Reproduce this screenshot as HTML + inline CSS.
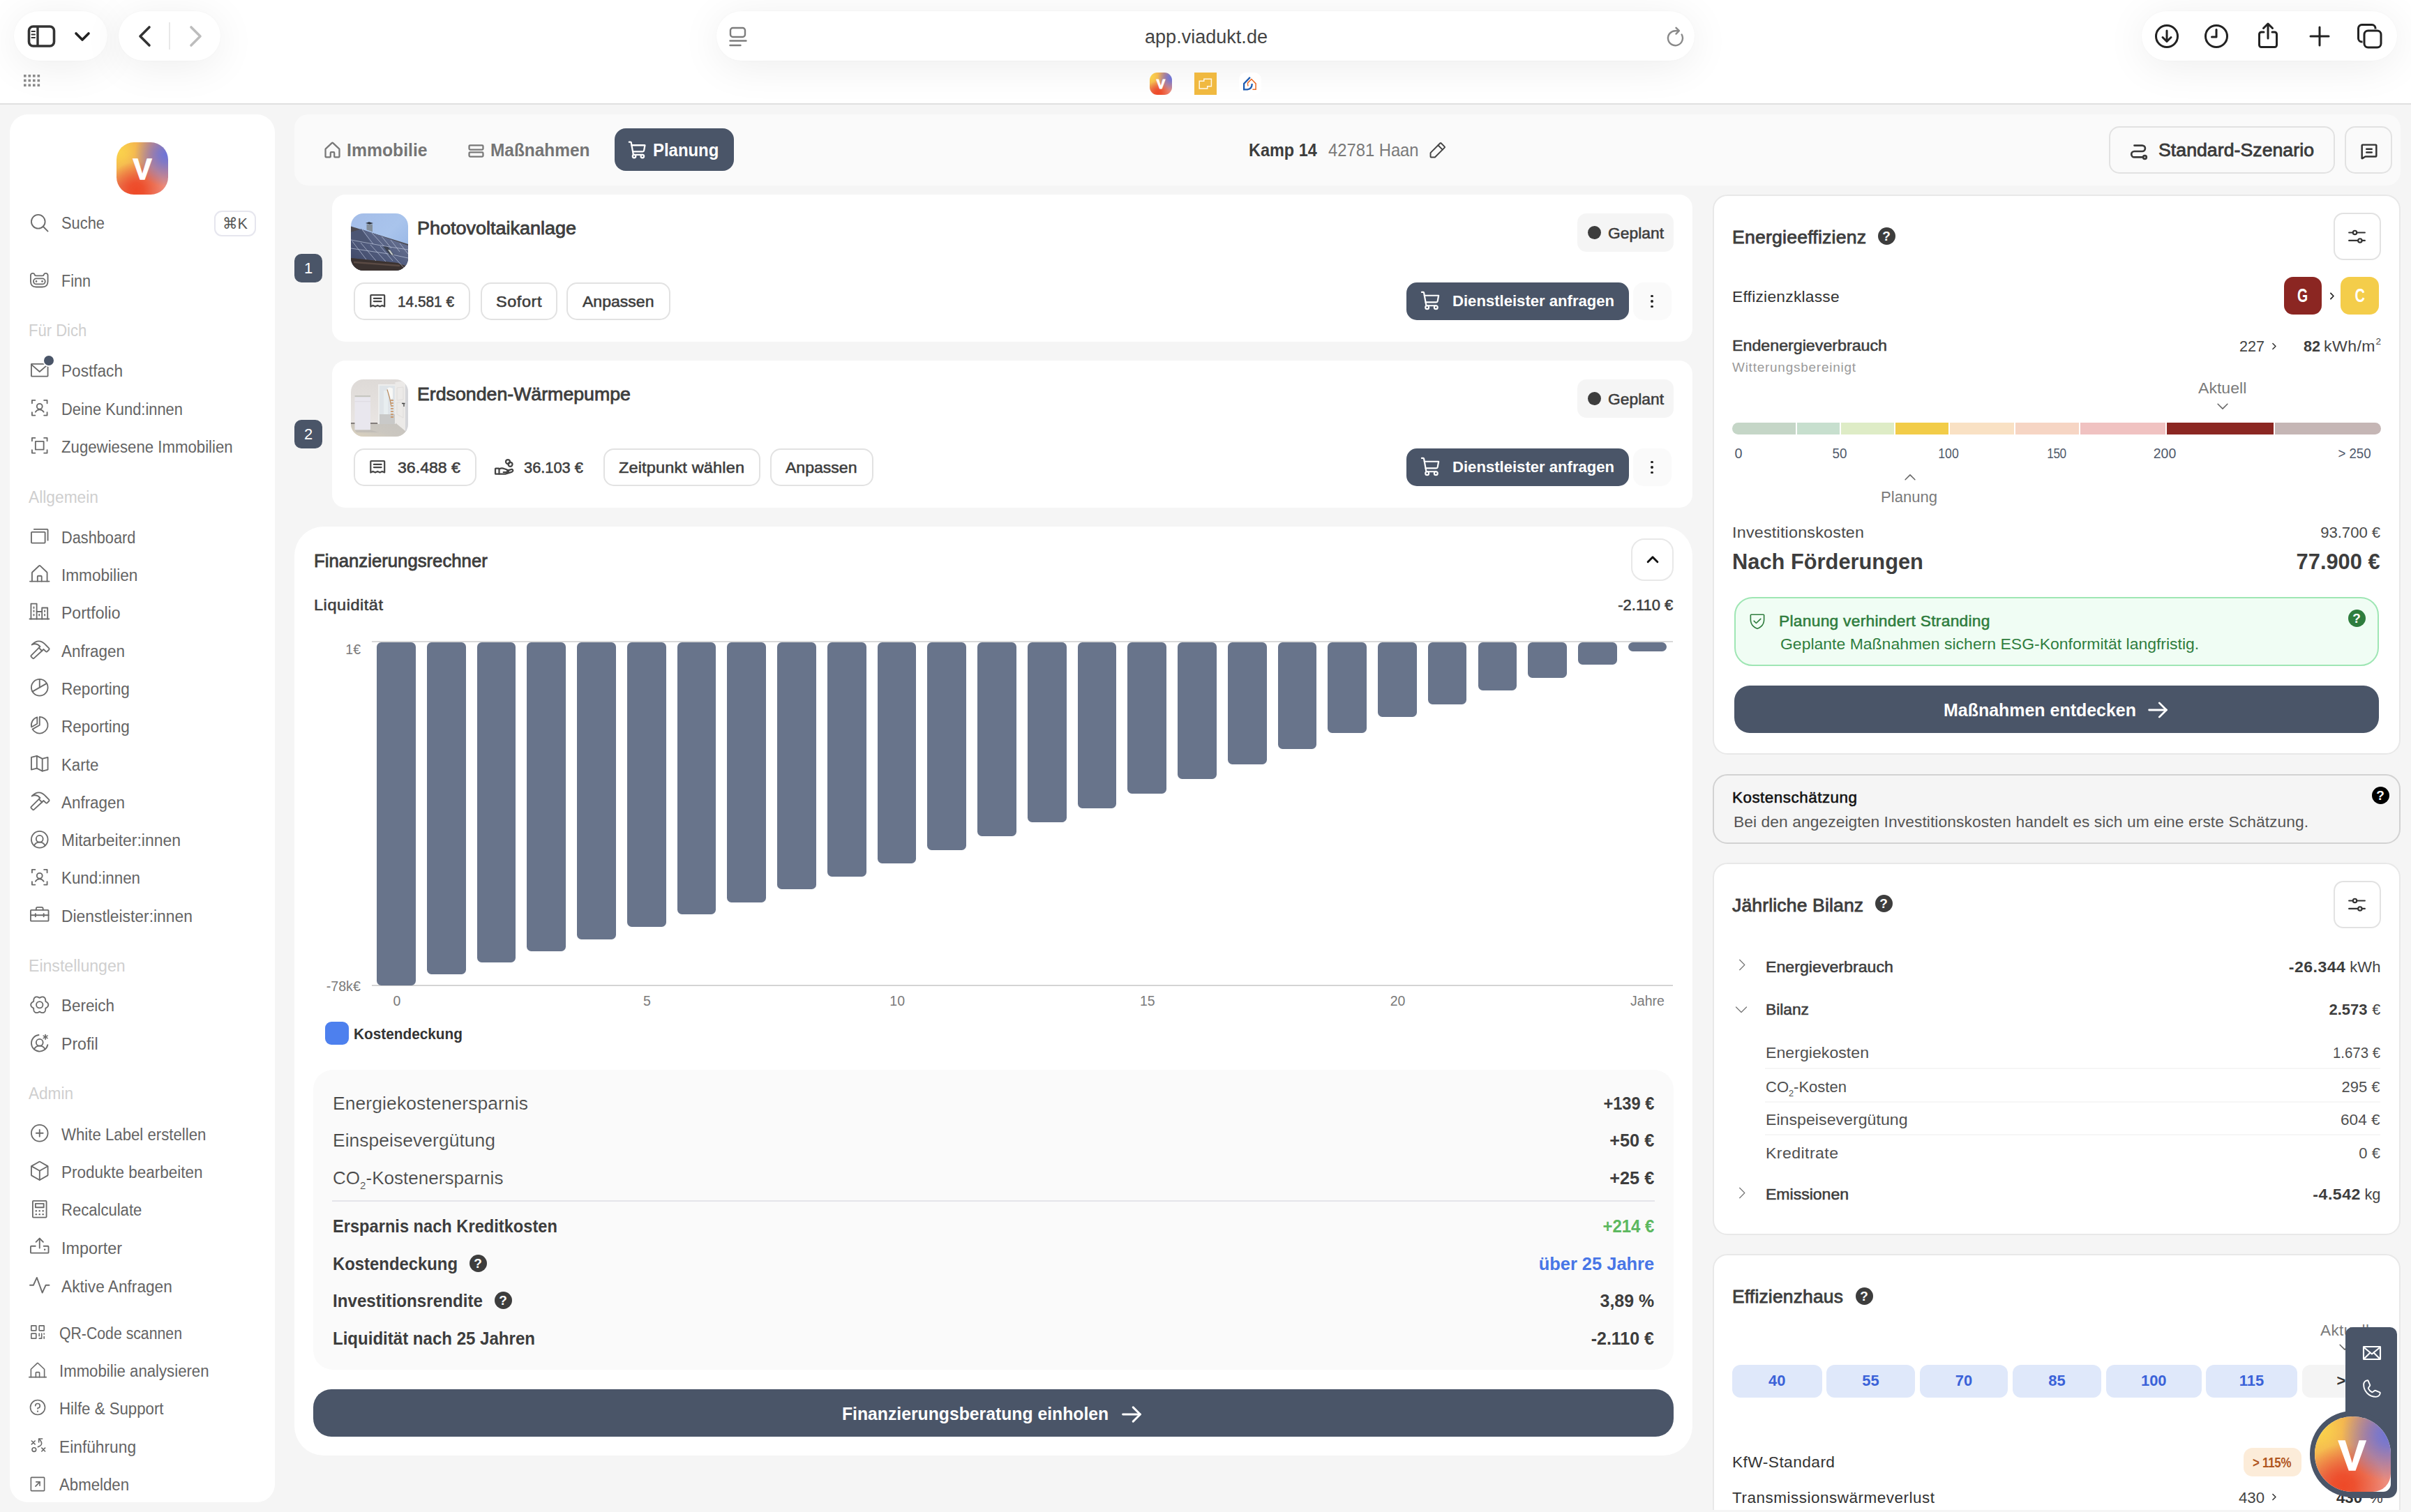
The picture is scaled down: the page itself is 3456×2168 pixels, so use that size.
<!DOCTYPE html>
<html lang="de"><head><meta charset="utf-8"><title>viadukt</title>
<style>
*{box-sizing:border-box;margin:0;padding:0}
html,body{width:3456px;height:2168px;overflow:hidden}
body{background:#f5f5f5;font-family:"Liberation Sans",sans-serif;color:#3d3d3d;position:relative;-webkit-font-smoothing:antialiased}
.a{position:absolute}
.t{position:absolute;white-space:nowrap;line-height:1;transform:translateY(calc(-50% + .7px))}
.tr{position:absolute;white-space:nowrap;line-height:1;transform:translateY(calc(-50% + .7px));text-align:right}
.b{font-weight:700}
.m{-webkit-text-stroke:0.55px currentColor}
.m2{-webkit-text-stroke:0.8px currentColor}
svg{position:absolute;overflow:visible}
.ic{fill:none;stroke:#6b6b6b;stroke-width:2;stroke-linecap:round;stroke-linejoin:round}
/* chrome */
#chrome{left:0;top:0;width:3456px;height:149.500px;background:#fff;border-bottom:2px solid #e0e0e0}
.pill{position:absolute;top:16px;height:71px;border-radius:36px;background:#fff;box-shadow:0 0 0 1px rgba(0,0,0,.012),0 8px 60px rgba(0,0,0,.075)}
/* sidebar */
#side{left:14px;top:164px;width:380px;height:1990px;background:#fff;border-radius:26px}
.si{color:#646464;font-size:23.5px;left:88px}
.sl{color:#cfcfcf;font-size:23.5px;left:41px}
.card{position:absolute;background:#fff;border-radius:19px}
.rc{position:absolute;left:2455px;width:986px;background:#fff;border:2px solid #e8e8e8;border-radius:21px}
.btn{position:absolute;border:2px solid #e2e2e2;border-radius:15px;background:#fff}
.dark{background:#4a5568;color:#fff}
.q{position:absolute;width:25px;height:25px;border-radius:50%;background:#3d3d3d;color:#fff;font-weight:700;font-size:19px;line-height:25.500px;text-align:center}
.bar{position:absolute;top:920.500px;width:55.800px;background:#68748b;border-radius:6.500px}
.xl{position:absolute;top:1435.700px;transform:translate(-50%,-50%);font-size:19.500px;color:#7a7a7a;line-height:1;white-space:nowrap}
.el{position:absolute;top:650.400px;transform:translate(-50%,-50%);font-size:20px;color:#505a6b;line-height:1;white-space:nowrap}
.chip{position:absolute;top:1957.400px;height:46.200px;border-radius:12px;background:#dfe8fa;color:#3a62d8;font-weight:700;font-size:21.900px;line-height:46.600px;text-align:center}
.dv{position:absolute;height:2px;background:#f6f6f6}

.pi{fill:none;stroke:currentColor;stroke-linecap:round;stroke-linejoin:round}
.pi .f{fill:currentColor;stroke:none}
.logo{background:radial-gradient(circle at 97% 24%,#6d74d8 0%,rgba(112,118,212,.85) 13%,rgba(150,110,170,0) 50%),radial-gradient(circle at 38% 92%,#ee4927 0%,rgba(238,74,40,.9) 13%,rgba(238,74,40,0) 50%),radial-gradient(circle at 6% 18%,#fad24c 0%,rgba(250,208,76,.88) 12%,rgba(250,208,76,0) 52%),linear-gradient(135deg,#f2a548 0%,#e68a62 48%,#ef8c82 100%)}
.sub{font-size:.58em;position:relative;top:.5em;letter-spacing:0}
</style></head><body>
<div id="chrome" class="a">
 <div class="pill" style="left:20px;width:134px"></div>
 <div class="pill" style="left:170px;width:146px"></div>
 <div class="pill" style="left:1027px;width:1402px"></div>
 <div class="pill" style="left:3070px;width:366px"></div>
 <!-- sidebar icon -->
 <svg style="left:38px;top:34px" width="44" height="36" viewBox="0 0 44 36"><rect x="3.5" y="4" width="36" height="28" rx="6" fill="none" stroke="#333" stroke-width="3.6"></rect><line x1="16" y1="4" x2="16" y2="32" stroke="#333" stroke-width="3.4"></line><path d="M7.5 11h4.5M7.5 15.5h4.5M7.5 20h4.5" stroke="#333" stroke-width="2" stroke-linecap="round"></path></svg>
 <svg style="left:106px;top:45px" width="24" height="16" viewBox="0 0 24 16"><path d="M3 3l9 9 9-9" fill="none" stroke="#222" stroke-width="3.6" stroke-linecap="round" stroke-linejoin="round"></path></svg>
 <svg style="left:197px;top:36px" width="22" height="32" viewBox="0 0 22 32"><path d="M17 3L4 16l13 13" fill="none" stroke="#333" stroke-width="3.6" stroke-linecap="round" stroke-linejoin="round"></path></svg>
 <div class="a" style="left:242px;top:32px;width:2px;height:39px;background:#e8e8e8"></div>
 <svg style="left:269px;top:36px" width="22" height="32" viewBox="0 0 22 32"><path d="M5 3l13 13L5 29" fill="none" stroke="#bdbdbd" stroke-width="3.6" stroke-linecap="round" stroke-linejoin="round"></path></svg>
 <!-- grid -->
 <svg style="left:34px;top:107px" width="24" height="18" viewBox="0 0 24 18" fill="#8a8a8a"><g id="gd"><rect x="0" y="0" width="3.6" height="3.6"></rect><rect x="6.5" y="0" width="3.6" height="3.6"></rect><rect x="13" y="0" width="3.6" height="3.6"></rect><rect x="19.5" y="0" width="3.6" height="3.6"></rect></g><use href="#gd" y="6.7"></use><use href="#gd" y="13.4"></use></svg>
 <!-- reader icon -->
 <svg style="left:1045px;top:38px" width="26" height="30" viewBox="0 0 26 30"><rect x="2" y="2" width="21" height="13" rx="3.5" fill="none" stroke="#7d7d7d" stroke-width="2.4"></rect><path d="M1.5 20.5h23M1.5 27h15" stroke="#7d7d7d" stroke-width="2.4" stroke-linecap="round"></path></svg>
 <div class="t" style="left: 1641px; top: 53.3px; font-size: 27px; color: rgb(68, 68, 68); transform: translateY(calc(-50% + 0.7px)) scaleX(1.002); transform-origin: left center;">app.viadukt.de</div>
 <!-- reload -->
 <svg style="left:2388px;top:38px" width="28" height="30" viewBox="0 0 28 30"><path d="M22.6 11.5A10.5 10.5 0 1 1 14 6.2h4" fill="none" stroke="#8a8a8a" stroke-width="2.4" stroke-linecap="round"></path><path d="M14.5 1.8l4.4 4.4-4.4 4.4" fill="none" stroke="#8a8a8a" stroke-width="2.4" stroke-linecap="round" stroke-linejoin="round"></path></svg>
 <!-- favicons -->
 <div class="a logo" style="left:1648px;top:104px;width:32px;height:32px;border-radius:11px"></div>
 <div class="a b" style="left:1648px;top:104px;width:32px;height:32px;line-height:33px;text-align:center;color:#fff;font-size:18.500px;-webkit-text-stroke:1px #fff">V</div>
 <div class="a" style="left:1712px;top:104px;width:32px;height:32px;background:#f0b940"></div>
 <svg style="left:1712px;top:104px" width="32" height="32" viewBox="0 0 32 32"><path d="M7.200 12.200H13.800V9.200H24.400V19.800H18.700V22.900H7.200Z" fill="none" stroke="#fff7e6" stroke-width="1.500"></path></svg>
 <div class="a" style="left:1776px;top:104px;width:32px;height:32px;background:#fff;border-radius:10px"></div>
 <svg style="left:1776px;top:104px" width="32" height="32" viewBox="0 0 32 32"><path d="M13.100 19.500Q11.800 16 12.700 14.600L17.900 9.500L24.100 15.900V24.300H19.400" fill="none" stroke="#ea6a25" stroke-width="1.500"></path><path d="M15.900 6.900L7.100 15.900V24.300H12Q18.700 23.500 18.700 15.900" fill="none" stroke="#1f5cb0" stroke-width="2.300"></path></svg>
 <!-- right icons -->
 <svg style="left:3088px;top:34px" width="36" height="36" viewBox="0 0 36 36"><circle cx="18" cy="18" r="15.5" fill="none" stroke="#222" stroke-width="3"></circle><path d="M18 10v15M12 19.5l6 6 6-6" fill="none" stroke="#222" stroke-width="3" stroke-linecap="round" stroke-linejoin="round"></path></svg>
 <svg style="left:3159px;top:34px" width="36" height="36" viewBox="0 0 36 36"><circle cx="18" cy="18" r="15.5" fill="none" stroke="#222" stroke-width="3"></circle><path d="M18 8.5V19h-6.5" fill="none" stroke="#222" stroke-width="3" stroke-linecap="round" stroke-linejoin="round"></path></svg>
 <svg style="left:3234px;top:31px" width="34" height="40" viewBox="0 0 34 40"><path d="M11 15H7.5a3 3 0 0 0-3 3v15.5a3 3 0 0 0 3 3h19a3 3 0 0 0 3-3V18a3 3 0 0 0-3-3H23" fill="none" stroke="#222" stroke-width="3" stroke-linecap="round"></path><path d="M17 24V3.5M10.5 9.5l6.500-6.500 6.500 6.500" fill="none" stroke="#222" stroke-width="3" stroke-linecap="round" stroke-linejoin="round"></path></svg>
 <svg style="left:3310px;top:37px" width="30" height="30" viewBox="0 0 30 30"><path d="M15 2v26M2 15h26" stroke="#222" stroke-width="3" stroke-linecap="round"></path></svg>
 <svg style="left:3378px;top:33px" width="38" height="38" viewBox="0 0 38 38"><rect x="11" y="11" width="24" height="24" rx="5.5" fill="#fff" stroke="#222" stroke-width="3"></rect><path d="M8.5 27H7.5a5 5 0 0 1-5-5V7.500a5 5 0 0 1 5-5H22a5 5 0 0 1 5 5v1" fill="none" stroke="#222" stroke-width="3"></path></svg>
</div>

<div id="side" class="a"></div>
<div class="a logo" style="left:167px;top:204px;width:74px;height:75px;border-radius:25px"></div>
<div class="a b" style="left:167px;top:204px;width:74px;height:75px;line-height:77px;text-align:center;color:#fff;font-size:42.500px;-webkit-text-stroke:1.500px #fff"><span style="display:inline-block;transform:scaleX(.94)">V</span></div>
<svg style="left:41px;top:303.5px;color:#6b6b6b;stroke-width:15" width="31.5" height="31.5" viewBox="0 0 256 256" class="pi"><circle cx="112" cy="112" r="80"></circle><line x1="168.600" y1="168.600" x2="224" y2="224"></line></svg>
<div class="t si" style="top: 319.5px; transform: translateY(calc(-50% + 0.7px)) scaleX(0.93); transform-origin: left center;">Suche</div>
<div class="a" style="left:307px;top:302px;width:60px;height:37px;border:2px solid #e6e6ee;border-radius:11px"></div>
<div class="t" style="left: 319px; top: 320.3px; font-size: 22px; color: rgb(85, 85, 85); transform: translateY(calc(-50% + 0.7px)) scaleX(0.981); transform-origin: left center;">⌘K</div>
<svg style="left:41px;top:385.2px;color:#6b6b6b;stroke-width:15" width="31.5" height="31.5" viewBox="0 0 256 256" class="pi"><path d="M24 150V78A24 24 0 0 1 70 70Q72 84 86 84H162Q176 84 178 70A24 24 0 0 1 224 78V150Q224 215 160 215H88Q24 215 24 150Z"></path><rect x="57" y="117" width="136" height="65" rx="32.500"></rect><circle cx="89.500" cy="149.500" r="10.500" class="f"></circle><circle cx="158.500" cy="149.500" r="10.500" class="f"></circle></svg>
<div class="t si" style="top: 402.9px; transform: translateY(calc(-50% + 0.7px)) scaleX(0.919); transform-origin: left center;">Finn</div>
<svg style="left:41px;top:514.7px;color:#6b6b6b;stroke-width:15" width="31.5" height="31.5" viewBox="0 0 256 256" class="pi"><rect x="32" y="56" width="192" height="144" rx="4"></rect><polyline points="224 62 128 146 32 62"></polyline></svg>
<div class="t si" style="top: 532.4px; transform: translateY(calc(-50% + 0.7px)) scaleX(0.962); transform-origin: left center;">Postfach</div>
<svg style="left:41px;top:568.8px;color:#6b6b6b;stroke-width:15" width="31.5" height="31.5" viewBox="0 0 256 256" class="pi"><polyline points="180 40 216 40 216 76"></polyline><polyline points="76 216 40 216 40 180"></polyline><polyline points="216 180 216 216 180 216"></polyline><polyline points="40 76 40 40 76 40"></polyline><circle cx="128" cy="112" r="32"></circle><path d="M80 176a56 56 0 0 1 96 0"></path></svg>
<div class="t si" style="top: 586.5px; transform: translateY(calc(-50% + 0.7px)) scaleX(0.931); transform-origin: left center;">Deine Kund:innen</div>
<svg style="left:41px;top:622.9px;color:#6b6b6b;stroke-width:15" width="31.5" height="31.5" viewBox="0 0 256 256" class="pi"><polyline points="180 40 216 40 216 76"></polyline><polyline points="76 216 40 216 40 180"></polyline><polyline points="216 180 216 216 180 216"></polyline><polyline points="40 76 40 40 76 40"></polyline><rect x="80" y="80" width="96" height="96" rx="2"></rect></svg>
<div class="t si" style="top: 640.6px; transform: translateY(calc(-50% + 0.7px)) scaleX(0.945); transform-origin: left center;">Zugewiesene Immobilien</div>
<svg style="left:41px;top:753.2px;color:#6b6b6b;stroke-width:15" width="31.5" height="31.5" viewBox="0 0 256 256" class="pi"><rect x="32" y="80" width="160" height="128" rx="8"></rect><path d="M64 48H216a8 8 0 0 1 8 8V176"></path></svg>
<div class="t si" style="top: 770.9px; transform: translateY(calc(-50% + 0.7px)) scaleX(0.925); transform-origin: left center;">Dashboard</div>
<svg style="left:41px;top:806.9px;color:#6b6b6b;stroke-width:15" width="31.5" height="31.5" viewBox="0 0 256 256" class="pi"><path d="M216 216V115.500a8 8 0 0 0-2.600-5.900l-80-75.500a8 8 0 0 0-10.800 0l-80 75.500a8 8 0 0 0-2.600 5.900V216"></path><line x1="16" y1="216" x2="240" y2="216"></line><path d="M152 216V160a8 8 0 0 0-8-8H112a8 8 0 0 0-8 8v56"></path></svg>
<div class="t si" style="top: 824.6px; transform: translateY(calc(-50% + 0.7px)) scaleX(0.962); transform-origin: left center;">Immobilien</div>
<svg style="left:41px;top:861.0px;color:#6b6b6b;stroke-width:15" width="31.5" height="31.5" viewBox="0 0 256 256" class="pi"><line x1="12" y1="215" x2="238" y2="215"></line><path d="M28 215V38H94.500V215"></path><path d="M94.500 130H156"></path><path d="M156 215V85H221V215"></path><path d="M61 76v14M61 117v14M61 161v14M124 161v14M188 117v14M188 161v14"></path></svg>
<div class="t si" style="top: 878.7px; transform: translateY(calc(-50% + 0.7px)) scaleX(0.98); transform-origin: left center;">Portfolio</div>
<svg style="left:41px;top:916.2px;color:#6b6b6b;stroke-width:15" width="31.5" height="31.5" viewBox="0 0 256 256" class="pi"><path d="M38 69Q120 -14 197 69L238 110Q244 118 238 126L215 149Q209 154 203 149L174 122L156 140L120 104L134 90Q90 42 38 69Z"></path><path d="M120 104L30 194a10 10 0 0 0 0 14l18 18a10 10 0 0 0 14 0L156 140"></path></svg>
<div class="t si" style="top: 933.9px; transform: translateY(calc(-50% + 0.7px)) scaleX(0.954); transform-origin: left center;">Anfragen</div>
<svg style="left:41px;top:969.9px;color:#6b6b6b;stroke-width:15" width="31.5" height="31.5" viewBox="0 0 256 256" class="pi"><circle cx="128" cy="128" r="96"></circle><line x1="128" y1="128" x2="128" y2="32"></line><line x1="211.100" y1="80" x2="44.900" y2="176"></line></svg>
<div class="t si" style="top: 987.6px; transform: translateY(calc(-50% + 0.7px)) scaleX(0.96); transform-origin: left center;">Reporting</div>
<svg style="left:41px;top:1024.2px;color:#6b6b6b;stroke-width:15" width="31.5" height="31.5" viewBox="0 0 256 256" class="pi"><path d="M128 32a96 96 0 1 1-83.100 144L128 128Z"></path><path d="M100 112V36A96 96 0 0 0 34 150Z"></path></svg>
<div class="t si" style="top: 1041.9px; transform: translateY(calc(-50% + 0.7px)) scaleX(0.96); transform-origin: left center;">Reporting</div>
<svg style="left:41px;top:1078.8px;color:#6b6b6b;stroke-width:15" width="31.5" height="31.5" viewBox="0 0 256 256" class="pi"><polyline points="96 184 32 200 32 56 96 40"></polyline><polygon points="160 216 96 184 96 40 160 72 160 216"></polygon><polyline points="160 72 224 56 224 200 160 216"></polyline></svg>
<div class="t si" style="top: 1096.5px; transform: translateY(calc(-50% + 0.7px)) scaleX(0.949); transform-origin: left center;">Karte</div>
<svg style="left:41px;top:1132.9px;color:#6b6b6b;stroke-width:15" width="31.5" height="31.5" viewBox="0 0 256 256" class="pi"><path d="M38 69Q120 -14 197 69L238 110Q244 118 238 126L215 149Q209 154 203 149L174 122L156 140L120 104L134 90Q90 42 38 69Z"></path><path d="M120 104L30 194a10 10 0 0 0 0 14l18 18a10 10 0 0 0 14 0L156 140"></path></svg>
<div class="t si" style="top: 1150.6px; transform: translateY(calc(-50% + 0.7px)) scaleX(0.954); transform-origin: left center;">Anfragen</div>
<svg style="left:41px;top:1187.7px;color:#6b6b6b;stroke-width:15" width="31.5" height="31.5" viewBox="0 0 256 256" class="pi"><circle cx="128" cy="128" r="96"></circle><circle cx="128" cy="120" r="40"></circle><path d="M63.800 199.400a72 72 0 0 1 128.400 0"></path></svg>
<div class="t si" style="top: 1205.4px; transform: translateY(calc(-50% + 0.7px)) scaleX(0.977); transform-origin: left center;">Mitarbeiter:innen</div>
<svg style="left:41px;top:1241.7px;color:#6b6b6b;stroke-width:15" width="31.5" height="31.5" viewBox="0 0 256 256" class="pi"><polyline points="180 40 216 40 216 76"></polyline><polyline points="76 216 40 216 40 180"></polyline><polyline points="216 180 216 216 180 216"></polyline><polyline points="40 76 40 40 76 40"></polyline><circle cx="128" cy="112" r="32"></circle><path d="M80 176a56 56 0 0 1 96 0"></path></svg>
<div class="t si" style="top: 1259.4px; transform: translateY(calc(-50% + 0.7px)) scaleX(0.95); transform-origin: left center;">Kund:innen</div>
<svg style="left:41px;top:1295.8px;color:#6b6b6b;stroke-width:15" width="31.5" height="31.5" viewBox="0 0 256 256" class="pi"><rect x="24" y="72" width="208" height="128" rx="8"></rect><line x1="24" y1="132" x2="232" y2="132"></line><path d="M88 72V56a16 16 0 0 1 16-16h48a16 16 0 0 1 16 16v16"></path><line x1="80" y1="116" x2="80" y2="148"></line><line x1="176" y1="116" x2="176" y2="148"></line></svg>
<div class="t si" style="top: 1313.5px; transform: translateY(calc(-50% + 0.7px)) scaleX(0.972); transform-origin: left center;">Dienstleister:innen</div>
<svg style="left:41px;top:1424.7px;color:#6b6b6b;stroke-width:15" width="31.5" height="31.5" viewBox="0 0 256 256" class="pi"><circle cx="128" cy="128" r="38"></circle><path d="M230.0 128.0 L229.7 132.4 L228.7 136.8 L227.2 141.1 L225.0 145.1 L222.4 148.9 L219.3 152.5 L215.9 155.7 L212.2 158.6 L208.3 161.3 L204.4 163.6 L200.7 165.8 L197.3 168.0 L197.1 172.0 L197.1 176.4 L197.0 180.9 L196.6 185.6 L195.9 190.2 L194.8 194.8 L193.3 199.3 L191.3 203.5 L188.9 207.3 L186.0 210.8 L182.7 213.8 L179.0 216.3 L175.0 218.3 L170.7 219.6 L166.3 220.4 L161.7 220.6 L157.1 220.2 L152.5 219.3 L147.9 217.9 L143.6 216.2 L139.3 214.2 L135.4 212.0 L131.6 209.8 L128.0 208.0 L124.4 209.8 L120.6 212.0 L116.7 214.2 L112.4 216.2 L108.1 217.9 L103.5 219.3 L98.9 220.2 L94.3 220.6 L89.7 220.4 L85.3 219.6 L81.0 218.3 L77.0 216.3 L73.3 213.8 L70.0 210.8 L67.1 207.3 L64.7 203.5 L62.7 199.3 L61.2 194.8 L60.1 190.2 L59.4 185.6 L59.0 180.9 L58.9 176.4 L58.9 172.0 L58.7 168.0 L55.3 165.8 L51.6 163.6 L47.7 161.3 L43.8 158.6 L40.1 155.7 L36.7 152.5 L33.6 148.9 L31.0 145.1 L28.8 141.1 L27.3 136.8 L26.3 132.4 L26.0 128.0 L26.3 123.6 L27.3 119.2 L28.8 114.9 L31.0 110.9 L33.6 107.1 L36.7 103.5 L40.1 100.3 L43.8 97.4 L47.7 94.7 L51.6 92.4 L55.3 90.2 L58.7 88.0 L58.9 84.0 L58.9 79.6 L59.0 75.1 L59.4 70.4 L60.1 65.8 L61.2 61.2 L62.7 56.7 L64.7 52.5 L67.1 48.7 L70.0 45.2 L73.3 42.2 L77.0 39.7 L81.0 37.7 L85.3 36.4 L89.7 35.6 L94.3 35.4 L98.9 35.8 L103.5 36.7 L108.1 38.1 L112.4 39.8 L116.7 41.8 L120.6 44.0 L124.4 46.2 L128.0 48.0 L131.6 46.2 L135.4 44.0 L139.3 41.8 L143.6 39.8 L147.9 38.1 L152.5 36.7 L157.1 35.8 L161.7 35.4 L166.3 35.6 L170.7 36.4 L175.0 37.7 L179.0 39.7 L182.7 42.2 L186.0 45.2 L188.9 48.7 L191.3 52.5 L193.3 56.7 L194.8 61.2 L195.9 65.8 L196.6 70.4 L197.0 75.1 L197.1 79.6 L197.1 84.0 L197.3 88.0 L200.7 90.2 L204.4 92.4 L208.3 94.7 L212.2 97.4 L215.9 100.3 L219.3 103.5 L222.4 107.1 L225.0 110.9 L227.2 114.9 L228.7 119.2 L229.7 123.6Z"></path></svg>
<div class="t si" style="top: 1442.4px; transform: translateY(calc(-50% + 0.7px)) scaleX(0.954); transform-origin: left center;">Bereich</div>
<svg style="left:41px;top:1479.5px;color:#6b6b6b;stroke-width:15" width="31.5" height="31.5" viewBox="0 0 256 256" class="pi"><circle cx="128" cy="120" r="40"></circle><path d="M63.800 199.400a72 72 0 0 1 128.400 0"></path><path d="M222 148A96 96 0 1 1 118 32.500"></path><path d="M196 28v56M172 42l48 28M220 42l-48 28" style="stroke-width:13"></path></svg>
<div class="t si" style="top: 1497.2px; transform: translateY(calc(-50% + 0.7px)) scaleX(0.982); transform-origin: left center;">Profil</div>
<svg style="left:41px;top:1609.2px;color:#6b6b6b;stroke-width:15" width="31.5" height="31.5" viewBox="0 0 256 256" class="pi"><circle cx="128" cy="128" r="96"></circle><line x1="88" y1="128" x2="168" y2="128"></line><line x1="128" y1="88" x2="128" y2="168"></line></svg>
<div class="t si" style="top: 1626.9px; transform: translateY(calc(-50% + 0.7px)) scaleX(0.945); transform-origin: left center;">White Label erstellen</div>
<svg style="left:41px;top:1663.2px;color:#6b6b6b;stroke-width:15" width="31.5" height="31.5" viewBox="0 0 256 256" class="pi"><path d="M224 177.300V78.700a8 8 0 0 0-4.100-7l-88-49.500a7.800 7.800 0 0 0-7.800 0l-88 49.500a8 8 0 0 0-4.100 7v98.600a8 8 0 0 0 4.100 7l88 49.500a7.800 7.800 0 0 0 7.800 0l88-49.500a8 8 0 0 0 4.100-7Z"></path><polyline points="222.900 74.600 128.900 128 33.100 74.600"></polyline><line x1="128.900" y1="128" x2="128" y2="234.800"></line></svg>
<div class="t si" style="top: 1680.9px; transform: translateY(calc(-50% + 0.7px)) scaleX(0.957); transform-origin: left center;">Produkte bearbeiten</div>
<svg style="left:41px;top:1717.7px;color:#6b6b6b;stroke-width:15" width="31.5" height="31.5" viewBox="0 0 256 256" class="pi"><rect x="48" y="32" width="160" height="192" rx="8"></rect><rect x="80" y="64" width="96" height="44"></rect><circle cx="88" cy="148" r="10" class="f"></circle><circle cx="128" cy="148" r="10" class="f"></circle><circle cx="168" cy="148" r="10" class="f"></circle><circle cx="88" cy="188" r="10" class="f"></circle><circle cx="128" cy="188" r="10" class="f"></circle><circle cx="168" cy="188" r="10" class="f"></circle></svg>
<div class="t si" style="top: 1735.4px; transform: translateY(calc(-50% + 0.7px)) scaleX(0.939); transform-origin: left center;">Recalculate</div>
<svg style="left:41px;top:1772.0px;color:#6b6b6b;stroke-width:15" width="31.5" height="31.5" viewBox="0 0 256 256" class="pi"><polyline points="86 72 128 30 170 72"></polyline><line x1="128" y1="142" x2="128" y2="30"></line><path d="M176 120h48a8 8 0 0 1 8 8v64a8 8 0 0 1-8 8H32a8 8 0 0 1-8-8V128a8 8 0 0 1 8-8H80"></path><circle cx="188" cy="160" r="10" class="f"></circle></svg>
<div class="t si" style="top: 1789.7px; transform: translateY(calc(-50% + 0.7px)) scaleX(0.994); transform-origin: left center;">Importer</div>
<svg style="left:41px;top:1827.1px;color:#6b6b6b;stroke-width:15" width="31.5" height="31.5" viewBox="0 0 256 256" class="pi"><polyline points="16 128 56 128 96 40 160 216 200 128 240 128"></polyline></svg>
<div class="t si" style="top: 1844.8px; transform: translateY(calc(-50% + 0.7px)) scaleX(0.965); transform-origin: left center;">Aktive Anfragen</div>
<div class="a" style="left:61px;top:508px;width:18px;height:18px;border-radius:50%;background:#4a5568;border:2px solid #fff"></div>
<div class="t sl" style="top: 473.9px; transform: translateY(calc(-50% + 0.7px)) scaleX(0.938); transform-origin: left center;">Für Dich</div>
<div class="t sl" style="top: 712.7px; transform: translateY(calc(-50% + 0.7px)) scaleX(0.969); transform-origin: left center;">Allgemein</div>
<div class="t sl" style="top: 1385.3px; transform: translateY(calc(-50% + 0.7px)) scaleX(0.982); transform-origin: left center;">Einstellungen</div>
<div class="t sl" style="top: 1568.3px; transform: translateY(calc(-50% + 0.7px)) scaleX(0.961); transform-origin: left center;">Admin</div>
<svg style="left:40px;top:1896.2px;color:#6b6b6b;stroke-width:15" width="28" height="28" viewBox="0 0 256 256" class="pi"><rect x="44" y="44" width="64" height="64" rx="4"></rect><rect x="44" y="148" width="64" height="64" rx="4"></rect><rect x="148" y="44" width="64" height="64" rx="4"></rect><path d="M148 148v32M148 212h32v-64M212 148v8M212 188v24"></path></svg>
<div class="t si" style="left: 84.5px; top: 1911.8px; transform: translateY(calc(-50% + 0.7px)) scaleX(0.904); transform-origin: left center;">QR-Code scannen</div>
<svg style="left:40px;top:1950.7px;color:#6b6b6b;stroke-width:15" width="28" height="28" viewBox="0 0 256 256" class="pi"><path d="M216 216V115.500a8 8 0 0 0-2.600-5.900l-80-75.500a8 8 0 0 0-10.800 0l-80 75.500a8 8 0 0 0-2.600 5.900V216"></path><line x1="16" y1="216" x2="240" y2="216"></line><path d="M152 216V160a8 8 0 0 0-8-8H112a8 8 0 0 0-8 8v56"></path></svg>
<div class="t si" style="left: 84.5px; top: 1966.3px; transform: translateY(calc(-50% + 0.7px)) scaleX(0.944); transform-origin: left center;">Immobilie analysieren</div>
<svg style="left:40px;top:2004.2px;color:#6b6b6b;stroke-width:15" width="28" height="28" viewBox="0 0 256 256" class="pi"><circle cx="128" cy="128" r="96"></circle><circle cx="128" cy="180" r="10" class="f"></circle><path d="M128 146v-8a30 30 0 1 0-30-30"></path></svg>
<div class="t si" style="left: 84.5px; top: 2019.8px; transform: translateY(calc(-50% + 0.7px)) scaleX(0.946); transform-origin: left center;">Hilfe &amp; Support</div>
<svg style="left:40px;top:2059.3px;color:#6b6b6b;stroke-width:15" width="28" height="28" viewBox="0 0 256 256" class="pi"><circle cx="81" cy="179" r="26"></circle><path d="M49 64l44 44M93 64L49 108M181 157l44 44M225 157l-44 44"></path><path d="M132 143Q190 125 178 85Q170 60 147 41"></path><polyline points="189 37 143 37 143 82"></polyline></svg>
<div class="t si" style="left: 84.5px; top: 2074.9px; transform: translateY(calc(-50% + 0.7px)) scaleX(0.968); transform-origin: left center;">Einführung</div>
<svg style="left:40px;top:2113.5px;color:#6b6b6b;stroke-width:15" width="28" height="28" viewBox="0 0 256 256" class="pi"><rect x="40" y="40" width="176" height="176" rx="8"></rect><polyline points="108 100 156 100 156 148"></polyline><line x1="100" y1="156" x2="156" y2="100"></line></svg>
<div class="t si" style="left: 84.5px; top: 2129.1px; transform: translateY(calc(-50% + 0.7px)) scaleX(0.945); transform-origin: left center;">Abmelden</div>
<div class="a" style="left:422px;top:164px;width:3019px;height:102px;background:#fafafa;border-radius:20px"></div>
<svg style="left:462px;top:201px;color:#787878;stroke-width:20" width="29" height="29" viewBox="0 0 256 256" class="pi"><path d="M152 208V160a8 8 0 0 0-8-8H112a8 8 0 0 0-8 8v48a8 8 0 0 1-8 8H48a8 8 0 0 1-8-8V115.500a8 8 0 0 1 2.600-5.900l80-75.500a8 8 0 0 1 10.800 0l80 75.500a8 8 0 0 1 2.600 5.900V208a8 8 0 0 1-8 8H160a8 8 0 0 1-8-8Z"></path></svg>
<div class="t b" style="left: 497px; top: 215.4px; font-size: 25.4px; color: rgb(117, 117, 117); transform: translateY(calc(-50% + 0.7px)) scaleX(0.975); transform-origin: left center;">Immobilie</div>
<svg style="left:667.5px;top:201.5px;color:#787878;stroke-width:20" width="29" height="29" viewBox="0 0 256 256" class="pi"><rect x="40" y="144" width="176" height="56" rx="12"></rect><rect x="40" y="56" width="176" height="56" rx="12"></rect></svg>
<div class="t b" style="left: 703px; top: 215.4px; font-size: 25.4px; color: rgb(117, 117, 117); transform: translateY(calc(-50% + 0.7px)) scaleX(0.962); transform-origin: left center;">Maßnahmen</div>
<div class="a dark" style="left:881px;top:184px;width:171px;height:61px;border-radius:16px"></div>
<svg style="left:899.5px;top:201px;color:#fff;stroke-width:20" width="29" height="29" viewBox="0 0 256 256" class="pi"><path d="M184 184H69.800L41.900 30.600A8 8 0 0 0 34.100 24H16"></path><circle cx="80" cy="204" r="20"></circle><circle cx="184" cy="204" r="20"></circle><path d="M62.500 144H188.100a15.900 15.900 0 0 0 15.700-13.100L216 64H48"></path></svg>
<div class="t b" style="left: 936px; top: 215.4px; font-size: 25.4px; color: rgb(255, 255, 255); transform: translateY(calc(-50% + 0.7px)) scaleX(0.942); transform-origin: left center;">Planung</div>
<div class="t b" style="left: 1790px; top: 215.4px; font-size: 25.6px; color: rgb(61, 61, 61); transform: translateY(calc(-50% + 0.7px)) scaleX(0.917); transform-origin: left center;">Kamp 14</div>
<div class="t" style="left: 1903.5px; top: 215.4px; font-size: 25.6px; color: rgb(122, 122, 122); transform: translateY(calc(-50% + 0.7px)) scaleX(0.929); transform-origin: left center;">42781 Haan</div>
<svg style="left:2046px;top:201px;color:#444;stroke-width:17" width="29" height="29" viewBox="0 0 256 256" class="pi"><path d="M92.700 216H48a8 8 0 0 1-8-8V163.300a7.900 7.900 0 0 1 2.300-5.600l120-120a8 8 0 0 1 11.400 0l44.600 44.600a8 8 0 0 1 0 11.400l-120 120A7.900 7.900 0 0 1 92.700 216Z"></path><line x1="136" y1="64" x2="192" y2="120"></line></svg>
<div class="btn" style="left:3023px;top:181px;width:324px;height:68px;background:transparent;border-color:#e2e2e2"></div>
<svg style="left:3051.4px;top:201.6px;color:#3a3a3a;stroke-width:23" width="30" height="30" viewBox="0 0 256 256" class="pi"><circle cx="200" cy="200" r="20"></circle><path d="M72 56H168a36 36 0 0 1 0 72H72a36 36 0 0 0 0 72H178"></path></svg>
<div class="t m2" style="left: 3093.5px; top: 215.4px; font-size: 25.6px; color: rgb(58, 58, 58); letter-spacing: 0.06px; transform: translateY(calc(-50% + 0.7px)) scaleX(1.04); transform-origin: left center;">Standard-Szenario</div>
<div class="btn" style="left:3361px;top:181px;width:68px;height:68px;background:transparent;border-color:#e2e2e2"></div>
<svg style="left:3380.5px;top:202px;color:#333;stroke-width:21" width="30" height="30" viewBox="0 0 256 256" class="pi"><path d="M40 208V56a8 8 0 0 1 8-8H208a8 8 0 0 1 8 8V184a8 8 0 0 1-8 8H82.500a8 8 0 0 0-5.200 1.900L45.200 214.200A3.200 3.200 0 0 1 40 208Z"></path><line x1="96" y1="100" x2="160" y2="100"></line><line x1="96" y1="140" x2="160" y2="140"></line></svg>
<div class="card" style="left:476px;top:279px;width:1950px;height:211px"></div>
<div class="a dark" style="left:422px;top:364px;width:40px;height:41px;border-radius:10px;line-height:42px;text-align:center;font-size:22px">1</div>
<svg style="left:503px;top:306px;border-radius:18px;overflow:hidden" width="82" height="82" viewBox="0 0 82 82"><defs><linearGradient id="sky" x1="0" y1="0" x2="1" y2="1"><stop offset="0" stop-color="#a4bde8"></stop><stop offset=".5" stop-color="#a9c4ec"></stop><stop offset="1" stop-color="#8fb0e2"></stop></linearGradient><linearGradient id="pan" x1="1" y1="0" x2="0" y2="1"><stop offset="0" stop-color="#737d9c"></stop><stop offset=".5" stop-color="#535e80"></stop><stop offset="1" stop-color="#3c4463"></stop></linearGradient></defs><rect width="82" height="82" fill="url(#sky)"></rect><path d="M0 18.500L82 44V82H0Z" fill="#4c4a51"></path><path d="M0 27L15 22.500L82 46V76L66 71L0 64Z" fill="url(#pan)"></path><path d="M0 27L15 22.500L29 44L0 38Z" fill="#4c5674"></path><path d="M0 64L67 71L82 77V82H0Z" fill="#3b3230"></path><path d="M4 70L70 75" stroke="#5a4a44" stroke-width="2.500"></path><path d="M0 38L46 46.500M0 50L57 58.500M16 23L32 44M30 28L78 80M44 33L58 50M57 38L70 55M70 43L82 58M2 40L22 66M14 42L36 68M28 45L50 69M42 47L60 68M46 46.500L82 52M57 58.500L82 64" stroke="#c2cbe0" stroke-width=".9" fill="none" opacity=".75"></path><path d="M22.500 15.500h8.500v11l-8.500-3z" fill="#848f9b"></path><path d="M21 14l5-1.800 6 1.800-5 1.600z" fill="#2a2e36"></path><path d="M46 47l7 1 9 12-7-1z" fill="#3c4250"></path><path d="M53 52l3 .5 5 7-3-.5z" fill="#c9d0cf"></path></svg>
<div class="t m2" style="left: 598px; top: 326px; font-size: 26.1px; color: rgb(61, 61, 61); transform: translateY(calc(-50% + 0.7px)) scaleX(1.034); transform-origin: left center;">Photovoltaikanlage</div>
<div class="a" style="left:2261px;top:306px;width:138px;height:55px;border-radius:13px;background:#f5f5f5"></div>
<div class="a" style="left:2275.500px;top:323.5px;width:19px;height:19px;border-radius:50%;background:#3d3d3d"></div>
<div class="t m" style="left: 2305px; top: 334px; font-size: 21.9px; color: rgb(61, 61, 61); letter-spacing: 0.04px; transform: translateY(calc(-50% + 0.7px)) scaleX(1.04); transform-origin: left center;">Geplant</div>
<div class="a dark" style="left:2016px;top:405px;width:319px;height:54px;border-radius:15px"></div>
<svg style="left:2035.5px;top:416px;color:#fff;stroke-width:18" width="31" height="31" viewBox="0 0 256 256" class="pi"><path d="M184 184H69.800L41.900 30.600A8 8 0 0 0 34.100 24H16"></path><circle cx="80" cy="204" r="20"></circle><circle cx="184" cy="204" r="20"></circle><path d="M62.500 144H188.100a15.900 15.900 0 0 0 15.700-13.100L216 64H48"></path></svg>
<div class="t b" style="left: 2081.5px; top: 432px; font-size: 22.6px; color: rgb(255, 255, 255); transform: translateY(calc(-50% + 0.7px)) scaleX(0.978); transform-origin: left center;">Dienstleister anfragen</div>
<div class="a" style="left:2341px;top:405px;width:55px;height:54px;border-radius:15px;background:#fafafa"></div>
<div class="a" style="left:2366.400px;top:422.6px;width:3.800px;height:3.800px;border-radius:50%;background:#222"></div>
<div class="a" style="left:2366.400px;top:430.1px;width:3.800px;height:3.800px;border-radius:50%;background:#222"></div>
<div class="a" style="left:2366.400px;top:437.6px;width:3.800px;height:3.800px;border-radius:50%;background:#222"></div>
<div class="btn" style="left:507px;top:404.7px;width:167px;height:54px"></div>
<svg style="left:528.2px;top:418.3px;color:#444;stroke-width:21" width="26.5" height="26.5" viewBox="0 0 256 256" class="pi"><path d="M32 208V56a8 8 0 0 1 8-8H216a8 8 0 0 1 8 8V208l-32-16-32 16-32-16-32 16-32-16Z"></path><line x1="76" y1="96" x2="180" y2="96"></line><line x1="76" y1="136" x2="180" y2="136"></line></svg>
<div class="t m" style="left: 569.5px; top: 432.5px; font-size: 22.6px; color: rgb(61, 61, 61); transform: translateY(calc(-50% + 0.7px)) scaleX(0.921); transform-origin: left center;">14.581 €</div>
<div class="btn" style="left:689px;top:404.7px;width:110px;height:54px"></div>
<div class="t m" style="left: 710.5px; top: 432.5px; font-size: 22.6px; color: rgb(61, 61, 61); letter-spacing: 0.54px; transform: translateY(calc(-50% + 0.7px)) scaleX(1.04); transform-origin: left center;">Sofort</div>
<div class="btn" style="left:812px;top:404.7px;width:149px;height:54px"></div>
<div class="t m" style="left: 835px; top: 432.5px; font-size: 22.6px; color: rgb(61, 61, 61); transform: translateY(calc(-50% + 0.7px)) scaleX(1.02); transform-origin: left center;">Anpassen</div>
<div class="card" style="left:476px;top:517px;width:1950px;height:211px"></div>
<div class="a dark" style="left:422px;top:602px;width:40px;height:41px;border-radius:10px;line-height:42px;text-align:center;font-size:22px">2</div>
<svg style="left:503px;top:544px;border-radius:18px;overflow:hidden" width="82" height="82" viewBox="0 0 82 82"><defs><linearGradient id="wl" x1="0" y1="0" x2="0" y2="1"><stop offset="0" stop-color="#dedad7"></stop><stop offset="1" stop-color="#ece8e6"></stop></linearGradient><linearGradient id="fl" x1="1" y1="0" x2="0" y2="1"><stop offset="0" stop-color="#c6c3bf"></stop><stop offset=".6" stop-color="#cbc7c0"></stop><stop offset="1" stop-color="#dcd2bd"></stop></linearGradient></defs><rect width="82" height="82" fill="url(#wl)"></rect><path d="M0 63H40L48 56H62L82 74V82H0Z" fill="url(#fl)"></path><rect x="0" y="62.300" width="6" height="1.200" fill="#4a4444"></rect><rect x="28" y="62.300" width="10" height="1.200" fill="#4a4444"></rect><rect x="39" y="7" width="25" height="57" fill="#ededec"></rect><rect x="41" y="9" width="22" height="55" fill="#dfe4e8"></rect><path d="M41 50H63V64H41Z" fill="#c9c9c8"></path><rect x="47" y="16" width="6" height="34" fill="#e8eef0"></rect><path d="M52 13q3-3 8 0v14l-4 2z" fill="#f8f8f6"></path><path d="M52 14.500Q56 26 57.500 37" stroke="#b98a5e" stroke-width="1.200" fill="none"></path><path d="M57 30h4M57 34h4M57 38h4M57 42h4M57 46h4M57 50h4M57 54h4" stroke="#c88a55" stroke-width="1.300"></path><path d="M63.500 4L78 2V74L63.500 62Z" fill="#eceae8"></path><path d="M66 12l9-1v18l-9 1zM66 33l9 0v22l-9-5z" fill="none" stroke="#dddad8" stroke-width=".8"></path><path d="M73 34.500h4.500M76 34v5" stroke="#444" stroke-width="1.300"></path><rect x="78" y="0" width="4" height="82" fill="#d5d6da"></rect><rect x="5.500" y="23" width="22.500" height="49.500" fill="#e9e7ee"></rect><rect x="5.500" y="23" width="22.500" height="2.200" fill="#c6c6c0"></rect><path d="M5.500 31.700H28" stroke="#d9d7de" stroke-width=".8"></path><path d="M5.500 72.500H28L40 76H8Z" fill="#b9b6b2" opacity=".6"></path></svg>
<div class="t m2" style="left: 598px; top: 564px; font-size: 26.1px; color: rgb(61, 61, 61); transform: translateY(calc(-50% + 0.7px)) scaleX(1.024); transform-origin: left center;">Erdsonden-Wärmepumpe</div>
<div class="a" style="left:2261px;top:544px;width:138px;height:55px;border-radius:13px;background:#f5f5f5"></div>
<div class="a" style="left:2275.500px;top:561.5px;width:19px;height:19px;border-radius:50%;background:#3d3d3d"></div>
<div class="t m" style="left: 2305px; top: 572px; font-size: 21.9px; color: rgb(61, 61, 61); letter-spacing: 0.04px; transform: translateY(calc(-50% + 0.7px)) scaleX(1.04); transform-origin: left center;">Geplant</div>
<div class="a dark" style="left:2016px;top:643px;width:319px;height:54px;border-radius:15px"></div>
<svg style="left:2035.5px;top:654px;color:#fff;stroke-width:18" width="31" height="31" viewBox="0 0 256 256" class="pi"><path d="M184 184H69.800L41.900 30.600A8 8 0 0 0 34.100 24H16"></path><circle cx="80" cy="204" r="20"></circle><circle cx="184" cy="204" r="20"></circle><path d="M62.500 144H188.100a15.900 15.900 0 0 0 15.700-13.100L216 64H48"></path></svg>
<div class="t b" style="left: 2081.5px; top: 670px; font-size: 22.6px; color: rgb(255, 255, 255); transform: translateY(calc(-50% + 0.7px)) scaleX(0.978); transform-origin: left center;">Dienstleister anfragen</div>
<div class="a" style="left:2341px;top:643px;width:55px;height:54px;border-radius:15px;background:#fafafa"></div>
<div class="a" style="left:2366.400px;top:660.6px;width:3.800px;height:3.800px;border-radius:50%;background:#222"></div>
<div class="a" style="left:2366.400px;top:668.1px;width:3.800px;height:3.800px;border-radius:50%;background:#222"></div>
<div class="a" style="left:2366.400px;top:675.6px;width:3.800px;height:3.800px;border-radius:50%;background:#222"></div>
<div class="btn" style="left:507px;top:642.7px;width:176px;height:54px"></div>
<svg style="left:528.2px;top:656.3px;color:#444;stroke-width:21" width="26.5" height="26.5" viewBox="0 0 256 256" class="pi"><path d="M32 208V56a8 8 0 0 1 8-8H216a8 8 0 0 1 8 8V208l-32-16-32 16-32-16-32 16-32-16Z"></path><line x1="76" y1="96" x2="180" y2="96"></line><line x1="76" y1="136" x2="180" y2="136"></line></svg>
<div class="t m" style="left: 569.5px; top: 670.5px; font-size: 22.6px; color: rgb(61, 61, 61); transform: translateY(calc(-50% + 0.7px)) scaleX(1.023); transform-origin: left center;">36.488 €</div>
<svg style="left:706.5px;top:653.5px;color:#444;stroke-width:18" width="32" height="32" viewBox="0 0 256 256" class="pi"><circle cx="168" cy="64" r="24"></circle><circle cx="196" cy="94" r="24"></circle><rect x="24" y="140" width="44" height="65" rx="6"></rect><path d="M68 205h70l72-22q22-10 14-24-8-12-26-4l-38 14"></path><path d="M68 148q30-16 56-4l34 12q18 4 18 16 0 12-18 12h-40"></path></svg>
<div class="t m" style="left: 751px; top: 670.5px; font-size: 22.6px; color: rgb(61, 61, 61); transform: translateY(calc(-50% + 0.7px)) scaleX(0.966); transform-origin: left center;">36.103 €</div>
<div class="btn" style="left:865px;top:642.7px;width:225px;height:54px"></div>
<div class="t m" style="left: 886.5px; top: 670.5px; font-size: 22.6px; color: rgb(61, 61, 61); letter-spacing: 0.15px; transform: translateY(calc(-50% + 0.7px)) scaleX(1.04); transform-origin: left center;">Zeitpunkt wählen</div>
<div class="btn" style="left:1104px;top:642.7px;width:148px;height:54px"></div>
<div class="t m" style="left: 1126px; top: 670.5px; font-size: 22.6px; color: rgb(61, 61, 61); transform: translateY(calc(-50% + 0.7px)) scaleX(1.02); transform-origin: left center;">Anpassen</div>
<div class="card" style="left:422px;top:755px;width:2004px;height:1332px;border-radius:42px"></div>
<div class="t m2" style="left: 450px; top: 803.5px; font-size: 25.8px; color: rgb(61, 61, 61); transform: translateY(calc(-50% + 0.7px)) scaleX(0.997); transform-origin: left center;">Finanzierungsrechner</div>
<div class="btn" style="left:2338px;top:772px;width:61px;height:61px;border-radius:19px;border-color:#e8e8e8"></div>
<svg style="left:2357.7px;top:791.5px;color:#111;stroke-width:33" width="22" height="22" viewBox="0 0 256 256" class="pi"><polyline points="48 160 128 80 208 160"></polyline></svg>
<div class="t m" style="left: 450px; top: 867.7px; font-size: 22.6px; color: rgb(61, 61, 61); letter-spacing: 0.53px; transform: translateY(calc(-50% + 0.7px)) scaleX(1.04); transform-origin: left center;">Liquidität</div>
<div class="tr m" style="right: 1058px; top: 867.5px; font-size: 22.6px; color: rgb(61, 61, 61); transform: translateY(calc(-50% + 0.7px)) scaleX(0.972); transform-origin: right center;">-2.110 €</div>
<div class="a" style="left:533px;top:919px;width:1865px;height:2px;background:#d9d9d9"></div>
<div class="a" style="left:533px;top:1412px;width:1865px;height:2px;background:#d4d4d4"></div>
<div class="tr" style="right:2939px;top:931px;font-size:19.500px;color:#7a7a7a">1€</div>
<div class="tr" style="right: 2939px; top: 1414px; font-size: 19.5px; color: rgb(122, 122, 122); transform: translateY(calc(-50% + 0.7px)) scaleX(1.004); transform-origin: right center;">-78k€</div>
<div class="bar" style="left:540.2px;height:492.5px"></div>
<div class="bar" style="left:611.9px;height:476.3px"></div>
<div class="bar" style="left:683.7px;height:459.9px"></div>
<div class="bar" style="left:755.4px;height:443.1px"></div>
<div class="bar" style="left:827.2px;height:426.3px"></div>
<div class="bar" style="left:898.9px;height:408.5px"></div>
<div class="bar" style="left:970.6px;height:390.9px"></div>
<div class="bar" style="left:1042.4px;height:373.2px"></div>
<div class="bar" style="left:1114.1px;height:354.5px"></div>
<div class="bar" style="left:1185.9px;height:336.1px"></div>
<div class="bar" style="left:1257.6px;height:317.1px"></div>
<div class="bar" style="left:1329.3px;height:298.1px"></div>
<div class="bar" style="left:1401.1px;height:278.2px"></div>
<div class="bar" style="left:1472.8px;height:258.2px"></div>
<div class="bar" style="left:1544.6px;height:238.0px"></div>
<div class="bar" style="left:1616.3px;height:217.2px"></div>
<div class="bar" style="left:1688.0px;height:196.1px"></div>
<div class="bar" style="left:1759.8px;height:175.0px"></div>
<div class="bar" style="left:1831.5px;height:153.0px"></div>
<div class="bar" style="left:1903.3px;height:130.5px"></div>
<div class="bar" style="left:1975.0px;height:107.5px"></div>
<div class="bar" style="left:2046.7px;height:89.1px"></div>
<div class="bar" style="left:2118.5px;height:69.5px"></div>
<div class="bar" style="left:2190.2px;height:51.2px"></div>
<div class="bar" style="left:2262.0px;height:32.2px"></div>
<div class="bar" style="left:2333.7px;height:13.2px"></div>
<div class="xl" style="left:568.9px">0</div>
<div class="xl" style="left:927.5px">5</div>
<div class="xl" style="left:1286.2px">10</div>
<div class="xl" style="left:1644.8px">15</div>
<div class="xl" style="left:2003.5px">20</div>
<div class="xl" style="left:2361.500px">Jahre</div>
<div class="a" style="left:466px;top:1464.500px;width:34px;height:33px;border-radius:9px;background:#4d80ee"></div>
<div class="t b" style="left: 507.4px; top: 1482px; font-size: 22px; color: rgb(51, 51, 51); transform: translateY(calc(-50% + 0.7px)) scaleX(0.945); transform-origin: left center;">Kostendeckung</div>
<div class="a" style="left:449px;top:1534px;width:1950px;height:430px;border-radius:28px;background:#fafafa"></div>
<div class="t" style="left: 477px; top: 1581.5px; font-size: 25.4px; color: rgb(69, 69, 69); -webkit-text-stroke: 0.2px rgb(250, 250, 250); letter-spacing: 0.12px; transform: translateY(calc(-50% + 0.7px)) scaleX(1.04); transform-origin: left center;">Energiekostenersparnis</div>
<div class="tr b" style="right: 1085px; top: 1581.5px; font-size: 25.4px; color: rgb(61, 61, 61); transform: translateY(calc(-50% + 0.7px)) scaleX(0.931); transform-origin: right center;">+139 €</div>
<div class="t" style="left: 477px; top: 1634.5px; font-size: 25.4px; color: rgb(69, 69, 69); -webkit-text-stroke: 0.2px rgb(250, 250, 250); letter-spacing: 0.06px; transform: translateY(calc(-50% + 0.7px)) scaleX(1.04); transform-origin: left center;">Einspeisevergütung</div>
<div class="tr b" style="right: 1085px; top: 1634.5px; font-size: 25.4px; color: rgb(61, 61, 61); transform: translateY(calc(-50% + 0.7px)) scaleX(0.996); transform-origin: right center;">+50 €</div>
<div class="t" style="left: 477px; top: 1688.5px; font-size: 25.4px; color: rgb(69, 69, 69); -webkit-text-stroke: 0.2px rgb(250, 250, 250); transform: translateY(calc(-50% + 0.7px)) scaleX(1.026); transform-origin: left center;">CO<span class="sub">2</span>-Kostenersparnis</div>
<div class="tr b" style="right: 1085px; top: 1688.5px; font-size: 25.4px; color: rgb(61, 61, 61); transform: translateY(calc(-50% + 0.7px)) scaleX(0.996); transform-origin: right center;">+25 €</div>
<div class="a" style="left:476px;top:1721px;width:1896px;height:2px;background:#e4e4ea"></div>
<div class="t b" style="left: 477px; top: 1758.1px; font-size: 25.4px; color: rgb(61, 61, 61); transform: translateY(calc(-50% + 0.7px)) scaleX(0.931); transform-origin: left center;">Ersparnis nach Kreditkosten</div>
<div class="tr b" style="right: 1085px; top: 1758.1px; font-size: 25.4px; color: rgb(92, 184, 95); transform: translateY(calc(-50% + 0.7px)) scaleX(0.942); transform-origin: right center;">+214 €</div>
<div class="t b" style="left: 477px; top: 1811.5px; font-size: 25.4px; color: rgb(61, 61, 61); transform: translateY(calc(-50% + 0.7px)) scaleX(0.94); transform-origin: left center;">Kostendeckung</div>
<div class="tr b" style="right: 1085px; top: 1811.5px; font-size: 25.4px; color: rgb(72, 118, 230); transform: translateY(calc(-50% + 0.7px)) scaleX(1.002); transform-origin: right center;">über 25 Jahre</div>
<div class="t b" style="left: 477px; top: 1865px; font-size: 25.4px; color: rgb(61, 61, 61); transform: translateY(calc(-50% + 0.7px)) scaleX(0.952); transform-origin: left center;">Investitionsrendite</div>
<div class="tr b" style="right: 1085px; top: 1865px; font-size: 25.4px; color: rgb(61, 61, 61); transform: translateY(calc(-50% + 0.7px)) scaleX(0.98); transform-origin: right center;">3,89 %</div>
<div class="t b" style="left: 477px; top: 1919px; font-size: 25.4px; color: rgb(61, 61, 61); transform: translateY(calc(-50% + 0.7px)) scaleX(0.947); transform-origin: left center;">Liquidität nach 25 Jahren</div>
<div class="tr b" style="right: 1085px; top: 1919px; font-size: 25.4px; color: rgb(61, 61, 61); transform: translateY(calc(-50% + 0.7px)) scaleX(0.981); transform-origin: right center;">-2.110 €</div>
<div class="q" style="left:672.500px;top:1799px">?</div>
<div class="q" style="left:708.500px;top:1852px">?</div>
<div class="a dark" style="left:449px;top:1992px;width:1950px;height:68px;border-radius:26px"></div>
<div class="t b" style="left: 1207.2px; top: 2027px; font-size: 25.3px; color: rgb(255, 255, 255); transform: translateY(calc(-50% + 0.7px)) scaleX(0.978); transform-origin: left center;">Finanzierungsberatung einholen</div>
<svg style="left:1603.8px;top:2009.6px;color:#fff;stroke-width:21" width="36" height="36" viewBox="0 0 256 256" class="pi"><line x1="40" y1="128" x2="216" y2="128"></line><polyline points="144 56 216 128 144 200"></polyline></svg>
<div class="rc" style="top:279px;height:803px"></div>
<div class="t m2" style="left: 2483px; top: 339.7px; font-size: 25.6px; color: rgb(61, 61, 61); letter-spacing: 0.2px; transform: translateY(calc(-50% + 0.7px)) scaleX(1.04); transform-origin: left center;">Energieeffizienz</div>
<div class="q" style="left:2691.500px;top:326px">?</div>
<div class="btn" style="left:3345px;top:305px;width:67.500px;height:67.500px;border-radius:14px"></div>
<svg style="left:3362px;top:322px;color:#333;stroke-width:17" width="33" height="33" viewBox="0 0 256 256" class="pi"><line x1="40" y1="89" x2="83" y2="89"></line><circle cx="105" cy="89" r="21"></circle><line x1="127" y1="89" x2="216" y2="89"></line><line x1="40" y1="178" x2="140" y2="178"></line><circle cx="162" cy="178" r="21"></circle><line x1="184" y1="178" x2="216" y2="178"></line></svg>
<div class="t" style="left: 2483px; top: 424.9px; font-size: 21.9px; color: rgb(51, 51, 51); letter-spacing: 0.24px; transform: translateY(calc(-50% + 0.7px)) scaleX(1.04); transform-origin: left center;">Effizienzklasse</div>
<div class="a b" style="left:3274px;top:397px;width:54px;height:54px;border-radius:13px;background:#8b2622;color:#fff;font-size:27px;line-height:55px;text-align:center"><span style="display:inline-block;transform:scaleX(.72)">G</span></div>
<div class="a b" style="left:3355px;top:397px;width:55px;height:54px;border-radius:13px;background:#f4cd4a;color:#fff;font-size:27px;line-height:55px;text-align:center"><span style="display:inline-block;transform:scaleX(.74)">C</span></div>
<svg style="left:3335.5px;top:417.5px;color:#222;stroke-width:34" width="13" height="13" viewBox="0 0 256 256" class="pi"><polyline points="96 48 176 128 96 208"></polyline></svg>
<div class="t m" style="left: 2483px; top: 495.9px; font-size: 22.4px; color: rgb(61, 61, 61); transform: translateY(calc(-50% + 0.7px)) scaleX(1.037); transform-origin: left center;">Endenergieverbrauch</div>
<div class="t" style="left: 2483px; top: 525.5px; font-size: 18.2px; color: rgb(154, 154, 154); letter-spacing: 0.75px; transform: translateY(calc(-50% + 0.7px)) scaleX(1.04); transform-origin: left center;">Witterungsbereinigt</div>
<div class="t" style="left: 3210px; top: 495.8px; font-size: 22.2px; color: rgb(68, 68, 68); transform: translateY(calc(-50% + 0.7px)) scaleX(0.972); transform-origin: left center;">227</div>
<svg style="left:3253px;top:490px;color:#333;stroke-width:30" width="13" height="13" viewBox="0 0 256 256" class="pi"><polyline points="96 48 176 128 96 208"></polyline></svg>
<div class="t b" style="left: 3302px; top: 495.8px; font-size: 22.2px; color: rgb(61, 61, 61); transform: translateY(calc(-50% + 0.7px)) scaleX(0.972); transform-origin: left center;">82</div>
<div class="t" style="left: 3331.2px; top: 495.8px; font-size: 22.2px; color: rgb(68, 68, 68); letter-spacing: 0.43px; transform: translateY(calc(-50% + 0.7px)) scaleX(1.04); transform-origin: left center;">kWh/m</div>
<div class="t" style="left:3405.500px;top:488.700px;font-size:13.500px;color:#444">2</div>
<div class="t" style="left: 3150.6px; top: 556.2px; font-size: 22.2px; color: rgb(122, 122, 122); transform: translateY(calc(-50% + 0.7px)) scaleX(1.04); transform-origin: left center;">Aktuell</div>
<svg style="left:3174.7px;top:571px;color:#666;stroke-width:18" width="22" height="22" viewBox="0 0 256 256" class="pi"><polyline points="208 96 128 176 48 96"></polyline></svg>
<div class="a" style="left:2483px;top:606px;width:930px;height:17px;border-radius:9px;overflow:hidden">
<div class="a" style="left:0.0px;top:0;width:91.0px;height:17px;background:#c5d6c7"></div>
<div class="a" style="left:93.0px;top:0;width:60.5px;height:17px;background:#c7dfce"></div>
<div class="a" style="left:156.0px;top:0;width:76.0px;height:17px;background:#deecc6"></div>
<div class="a" style="left:234.0px;top:0;width:75.5px;height:17px;background:#f2cc48"></div>
<div class="a" style="left:312.0px;top:0;width:91.5px;height:17px;background:#f9e1c4"></div>
<div class="a" style="left:405.5px;top:0;width:91.5px;height:17px;background:#f6d5c4"></div>
<div class="a" style="left:499.0px;top:0;width:122.0px;height:17px;background:#f0c2c1"></div>
<div class="a" style="left:623.0px;top:0;width:153.0px;height:17px;background:#8b2722"></div>
<div class="a" style="left:777.5px;top:0;width:152.0px;height:17px;background:#c5b6b5"></div>
</div>
<div class="el" style="left:2491.5px"><span style="display: inline-block; transform: scaleX(0.989); transform-origin: center center;">0</span></div>
<div class="el" style="left:2637px"><span style="display: inline-block; transform: scaleX(0.944); transform-origin: center center;">50</span></div>
<div class="el" style="left:2792.5px"><span style="display: inline-block; transform: scaleX(0.884); transform-origin: center center;">100</span></div>
<div class="el" style="left:2947.5px"><span style="letter-spacing: -0.41px; display: inline-block; transform: scaleX(0.86); transform-origin: center center;">150</span></div>
<div class="el" style="left:3102.5px"><span style="display: inline-block; transform: scaleX(0.974); transform-origin: center center;">200</span></div>
<div class="el" style="left:3375px"><span style="display: inline-block; transform: scaleX(0.933); transform-origin: center center;">&gt; 250</span></div>
<svg style="left:2726.5px;top:673.7px;color:#666;stroke-width:18" width="22" height="22" viewBox="0 0 256 256" class="pi"><polyline points="48 160 128 80 208 160"></polyline></svg>
<div class="t" style="left: 2695.5px; top: 713px; font-size: 22.5px; color: rgb(122, 122, 122); transform: translateY(calc(-50% + 0.7px)) scaleX(0.981); transform-origin: left center;">Planung</div>
<div class="t" style="left: 2483px; top: 764px; font-size: 22.4px; color: rgb(74, 74, 74); letter-spacing: 0.22px; transform: translateY(calc(-50% + 0.7px)) scaleX(1.04); transform-origin: left center;">Investitionskosten</div>
<div class="tr" style="right: 44px; top: 764px; font-size: 22.4px; color: rgb(74, 74, 74); transform: translateY(calc(-50% + 0.7px)) scaleX(0.987); transform-origin: right center;">93.700 €</div>
<div class="t b" style="left: 2483px; top: 804px; font-size: 32px; color: rgb(61, 61, 61); transform: translateY(calc(-50% + 0.7px)) scaleX(0.963); transform-origin: left center;">Nach Förderungen</div>
<div class="tr b" style="right: 44px; top: 804px; font-size: 32px; color: rgb(61, 61, 61); transform: translateY(calc(-50% + 0.7px)) scaleX(0.963); transform-origin: right center;">77.900 €</div>
<div class="a" style="left:2486px;top:856px;width:924px;height:99px;border:2.500px solid #9fe6b4;border-radius:26px;background:#f0fdf4"></div>
<svg style="left:2505px;top:876px;color:#2f7d3e;stroke-width:15" width="28" height="28" viewBox="0 0 256 256" class="pi"><path d="M40 114.700V56a8 8 0 0 1 8-8H208a8 8 0 0 1 8 8v58.700c0 84-71.300 111.800-85.500 116.500a7.200 7.200 0 0 1-5 0C111.300 226.500 40 198.700 40 114.700Z"></path><polyline points="172 104 113.300 160 84 132"></polyline></svg>
<div class="t m" style="left: 2549.7px; top: 890.2px; font-size: 21.9px; color: rgb(47, 125, 62); letter-spacing: 0.27px; transform: translateY(calc(-50% + 0.7px)) scaleX(1.04); transform-origin: left center;">Planung verhindert Stranding</div>
<div class="t" style="left: 2552.2px; top: 923.6px; font-size: 22.6px; color: rgb(47, 125, 62); transform: translateY(calc(-50% + 0.7px)) scaleX(1.017); transform-origin: left center;">Geplante Maßnahmen sichern ESG-Konformität langfristig.</div>
<div class="q" style="left:3365.500px;top:874px;background:#2f7d3e">?</div>
<div class="a dark" style="left:2486px;top:983px;width:924px;height:68px;border-radius:22px"></div>
<div class="t b" style="left: 2786px; top: 1017.8px; font-size: 25.4px; color: rgb(255, 255, 255); transform: translateY(calc(-50% + 0.7px)) scaleX(0.983); transform-origin: left center;">Maßnahmen entdecken</div>
<svg style="left:3075px;top:1000px;color:#fff;stroke-width:20" width="36" height="36" viewBox="0 0 256 256" class="pi"><line x1="40" y1="128" x2="216" y2="128"></line><polyline points="144 56 216 128 144 200"></polyline></svg>
<div class="rc" style="top:1110px;height:100px;background:#f5f5f5;border-color:#d2d2d2"></div>
<div class="t m" style="left: 2483px; top: 1144.1px; font-size: 21.5px; color: rgb(17, 17, 17); letter-spacing: 0.51px; transform: translateY(calc(-50% + 0.7px)) scaleX(1.04); transform-origin: left center;">Kostenschätzung</div>
<div class="t" style="left: 2484.5px; top: 1177.8px; font-size: 21.9px; color: rgb(85, 85, 85); letter-spacing: 0.08px; transform: translateY(calc(-50% + 0.7px)) scaleX(1.04); transform-origin: left center;">Bei den angezeigten Investitionskosten handelt es sich um eine erste Schätzung.</div>
<div class="q" style="left:3399.500px;top:1127.500px;background:#000">?</div>
<div class="rc" style="top:1237px;height:534px"></div>
<div class="t m2" style="left: 2483px; top: 1297.8px; font-size: 25.5px; color: rgb(61, 61, 61); letter-spacing: 0.15px; transform: translateY(calc(-50% + 0.7px)) scaleX(1.04); transform-origin: left center;">Jährliche Bilanz</div>
<div class="q" style="left:2687.500px;top:1283px">?</div>
<div class="btn" style="left:3345px;top:1263px;width:67.500px;height:67.500px;border-radius:14px"></div>
<svg style="left:3362px;top:1280px;color:#333;stroke-width:17" width="33" height="33" viewBox="0 0 256 256" class="pi"><line x1="40" y1="89" x2="83" y2="89"></line><circle cx="105" cy="89" r="21"></circle><line x1="127" y1="89" x2="216" y2="89"></line><line x1="40" y1="178" x2="140" y2="178"></line><circle cx="162" cy="178" r="21"></circle><line x1="184" y1="178" x2="216" y2="178"></line></svg>
<svg style="left:2485px;top:1372.2px;color:#777;stroke-width:14" width="23" height="23" viewBox="0 0 256 256" class="pi"><polyline points="96 48 176 128 96 208"></polyline></svg>
<div class="t m" style="left: 2530.5px; top: 1385.7px; font-size: 22.2px; color: rgb(61, 61, 61); letter-spacing: 0.05px; transform: translateY(calc(-50% + 0.7px)) scaleX(1.04); transform-origin: left center;">Energieverbrauch</div>
<div class="tr" style="right: 44px; top: 1385.7px; font-size: 22.2px; color: rgb(68, 68, 68); transform: translateY(calc(-50% + 0.7px)) scaleX(0.992); transform-origin: right center;">kWh</div>
<div class="tr b" style="right: 94px; top: 1385.7px; font-size: 22.2px; color: rgb(61, 61, 61); letter-spacing: 0.44px; transform: translateY(calc(-50% + 0.7px)) scaleX(1.04); transform-origin: right center; margin-right: -0.44px;">-26.344</div>
<svg style="left:2484px;top:1434.7px;color:#777;stroke-width:14" width="24" height="24" viewBox="0 0 256 256" class="pi"><polyline points="208 96 128 176 48 96"></polyline></svg>
<div class="t m" style="left: 2530.5px; top: 1446.7px; font-size: 22.2px; color: rgb(61, 61, 61); transform: translateY(calc(-50% + 0.7px)) scaleX(1.026); transform-origin: left center;">Bilanz</div>
<div class="tr" style="right: 44px; top: 1446.7px; font-size: 22.2px; color: rgb(68, 68, 68); transform: translateY(calc(-50% + 0.7px)) scaleX(0.972); transform-origin: right center;">€</div>
<div class="tr b" style="right: 62px; top: 1446.7px; font-size: 22.2px; color: rgb(61, 61, 61); transform: translateY(calc(-50% + 0.7px)) scaleX(0.99); transform-origin: right center;">2.573</div>
<div class="t" style="left: 2530.5px; top: 1508.6px; font-size: 22.2px; color: rgb(80, 80, 80); letter-spacing: 0.04px; transform: translateY(calc(-50% + 0.7px)) scaleX(1.04); transform-origin: left center;">Energiekosten</div>
<div class="tr" style="right: 44px; top: 1508.6px; font-size: 22.2px; color: rgb(80, 80, 80); transform: translateY(calc(-50% + 0.7px)) scaleX(0.919); transform-origin: right center;">1.673 €</div>
<div class="dv" style="left:2530px;top:1531px;width:882px"></div>
<div class="t" style="left: 2530.5px; top: 1557.6px; font-size: 22.2px; color: rgb(80, 80, 80); transform: translateY(calc(-50% + 0.7px)) scaleX(0.992); transform-origin: left center;">CO<span class="sub">2</span>-Kosten</div>
<div class="tr" style="right: 44px; top: 1557.6px; font-size: 22.2px; color: rgb(80, 80, 80); transform: translateY(calc(-50% + 0.7px)) scaleX(0.99); transform-origin: right center;">295 €</div>
<div class="dv" style="left:2530px;top:1579px;width:882px"></div>
<div class="t" style="left: 2530.5px; top: 1604.6px; font-size: 22.2px; color: rgb(80, 80, 80); letter-spacing: 0.05px; transform: translateY(calc(-50% + 0.7px)) scaleX(1.04); transform-origin: left center;">Einspeisevergütung</div>
<div class="tr" style="right: 44px; top: 1604.6px; font-size: 22.2px; color: rgb(80, 80, 80); transform: translateY(calc(-50% + 0.7px)) scaleX(1.017); transform-origin: right center;">604 €</div>
<div class="dv" style="left:2530px;top:1626px;width:882px"></div>
<div class="t" style="left: 2530.5px; top: 1652.6px; font-size: 22.2px; color: rgb(80, 80, 80); letter-spacing: 0.42px; transform: translateY(calc(-50% + 0.7px)) scaleX(1.04); transform-origin: left center;">Kreditrate</div>
<div class="tr" style="right: 44px; top: 1652.6px; font-size: 22.2px; color: rgb(80, 80, 80); transform: translateY(calc(-50% + 0.7px)) scaleX(0.989); transform-origin: right center;">0 €</div>
<svg style="left:2485px;top:1698.7px;color:#777;stroke-width:14" width="23" height="23" viewBox="0 0 256 256" class="pi"><polyline points="96 48 176 128 96 208"></polyline></svg>
<div class="t m" style="left: 2530.5px; top: 1712.2px; font-size: 22.2px; color: rgb(61, 61, 61); transform: translateY(calc(-50% + 0.7px)) scaleX(1.038); transform-origin: left center;">Emissionen</div>
<div class="tr" style="right: 44px; top: 1712.2px; font-size: 22.2px; color: rgb(68, 68, 68); transform: translateY(calc(-50% + 0.7px)) scaleX(0.981); transform-origin: right center;">kg</div>
<div class="tr b" style="right: 73px; top: 1712.2px; font-size: 22.2px; color: rgb(61, 61, 61); letter-spacing: 0.49px; transform: translateY(calc(-50% + 0.7px)) scaleX(1.04); transform-origin: right center; margin-right: -0.49px;">-4.542</div>
<div class="rc" style="top:1798px;height:420px"></div>
<div class="t m2" style="left: 2483px; top: 1859px; font-size: 25.4px; color: rgb(61, 61, 61); letter-spacing: 0.19px; transform: translateY(calc(-50% + 0.7px)) scaleX(1.04); transform-origin: left center;">Effizienzhaus</div>
<div class="q" style="left:2659.500px;top:1846px">?</div>
<div class="t" style="left: 3326px; top: 1907.2px; font-size: 21.7px; color: rgb(122, 122, 122); letter-spacing: 0.37px; transform: translateY(calc(-50% + 0.7px)) scaleX(1.04); transform-origin: left center;">Aktuell</div>
<svg style="left:3349.5px;top:1919.5px;color:#666;stroke-width:18" width="22" height="22" viewBox="0 0 256 256" class="pi"><polyline points="208 96 128 176 48 96"></polyline></svg>
<div class="chip" style="left:2483px;width:128.5px">40</div>
<div class="chip" style="left:2618px;width:127px">55</div>
<div class="chip" style="left:2752px;width:126px">70</div>
<div class="chip" style="left:2885px;width:127px">85</div>
<div class="chip" style="left:3019px;width:136.5px">100</div>
<div class="chip" style="left:3162px;width:131px">115</div>
<div class="chip" style="left:3300px;width:112px;background:#f4f4f4;color:#333">&gt;</div>
<div class="t" style="left: 2483px; top: 2096px; font-size: 21.9px; color: rgb(51, 51, 51); letter-spacing: 0.39px; transform: translateY(calc(-50% + 0.7px)) scaleX(1.04); transform-origin: left center;">KfW-Standard</div>
<div class="a" style="left:3216px;top:2076px;width:83px;height:41px;border-radius:13px;background:#fcecd9"></div>
<div class="t b" style="left: 3228.8px; top: 2096.8px; font-size: 19.6px; color: rgb(176, 86, 31); letter-spacing: -0.3px; transform: translateY(calc(-50% + 0.7px)) scaleX(0.86); transform-origin: left center;">&gt; 115%</div>
<div class="t" style="left: 2483px; top: 2147.1px; font-size: 21.6px; color: rgb(51, 51, 51); letter-spacing: 0.5px; transform: translateY(calc(-50% + 0.7px)) scaleX(1.04); transform-origin: left center;">Transmissionswärmeverlust</div>
<div class="t" style="left: 3208.5px; top: 2147px; font-size: 22.2px; color: rgb(68, 68, 68); transform: translateY(calc(-50% + 0.7px)) scaleX(0.999); transform-origin: left center;">430</div>
<svg style="left:3253px;top:2140px;color:#333;stroke-width:30" width="13" height="13" viewBox="0 0 256 256" class="pi"><polyline points="96 48 176 128 96 208"></polyline></svg>
<div class="t b" style="left:3349px;top:2147px;font-size:22.200px;color:#333">430</div>
<div class="t" style="left:3396px;top:2147px;font-size:22.200px;color:#444">%</div>
<div class="a" style="left:2440px;top:2164.600px;width:1016px;height:4px;background:#f5f5f5"></div>
<div class="a" style="left:3362px;top:1903px;width:74px;height:244.500px;border-radius:10px 10px 13px 10px;background:#4a5568"></div>
<svg style="left:3383.5px;top:1924px;color:#fff;stroke-width:17" width="32" height="32" viewBox="0 0 256 256" class="pi"><rect x="32" y="56" width="192" height="144" rx="4"></rect><polyline points="224 60 128 140 32 60"></polyline><path d="M36 196l72-72M220 196l-72-72"></path></svg>
<svg style="left:3383px;top:1974.5px;color:#fff;stroke-width:15" width="33" height="33" viewBox="0 0 256 256" class="pi"><path d="M92.500 124.800a83.600 83.600 0 0 0 39 38.900 8 8 0 0 0 7.900-.6l25-16.700a7.900 7.900 0 0 1 7.600-.7l46.800 20.100a7.900 7.900 0 0 1 4.800 8.300A48 48 0 0 1 176 216 136 136 0 0 1 40 80 48 48 0 0 1 81.900 32.400a7.900 7.900 0 0 1 8.300 4.800l20.100 46.900a8 8 0 0 1-.6 7.500L93 117a8 8 0 0 0-.5 7.800Z"></path></svg>
<div class="a" style="left:3310.600px;top:2023px;width:123.600px;height:123.600px;border-radius:50% 50% 18px 50%;background:#4a5568"></div>
<div class="a" style="left:3318px;top:2030.500px;width:109px;height:108.500px;border-radius:50% 50% 11px 50%;background:#fff"></div>
<div class="a logo" style="left:3318px;top:2030.500px;width:109px;height:108.500px;border-radius:50% 50% 26px 50%"></div>
<div class="a b" style="left:3317px;top:2031px;width:109px;height:109px;line-height:111px;text-align:center;color:#fff;font-size:62px;-webkit-text-stroke:1.500px #fff"><span style="display:inline-block;transform:scaleX(.96)">V</span></div>

</body></html>
